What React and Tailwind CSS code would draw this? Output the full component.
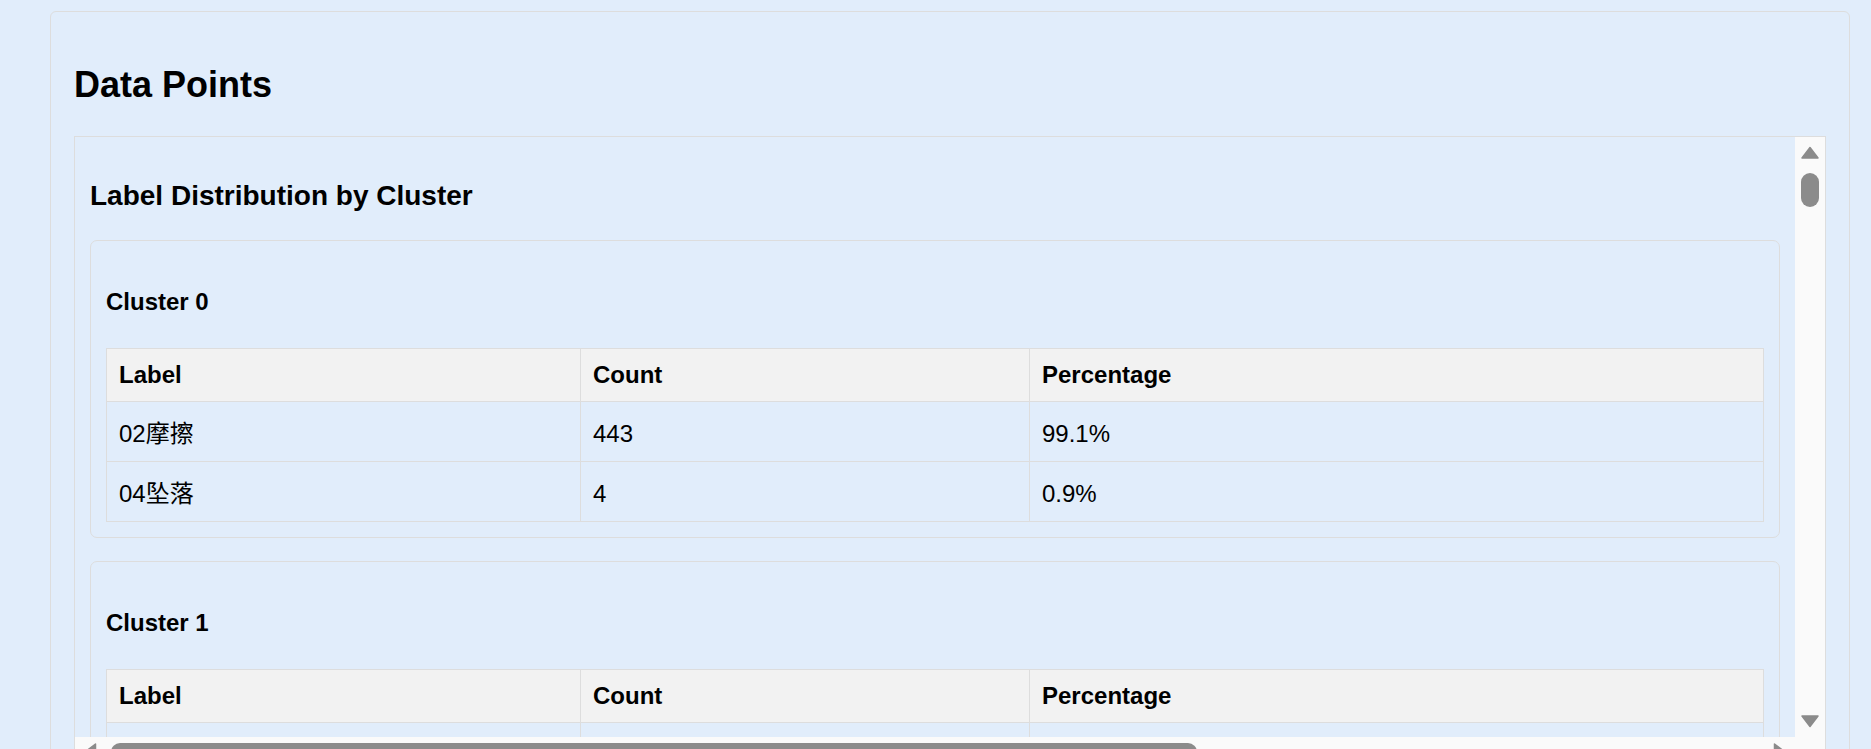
const clusters = [
  {
    id: 0,
    rows: [
      ['02摩擦', 443, '99.1%'],
      ['04坠落', 4, '0.9%'],
    ],
  },
  {
    id: 1,
    rows: [
      ['02摩擦', 318, '97.2%'],
      ['04坠落', 9, '2.8%'],
    ],
  },
];

const cell = 'border border-[#dddddd] p-[12px] text-left align-baseline';

const Arrow = ({ dir }) => {
  const points = {
    up: '9,1.5 17,12 1,12',
    down: '1,1 17,1 9,11.5',
    left: '11.5,1 11.5,17 1,9',
    right: '1.5,1 1.5,17 12,9',
  }[dir];
  const vertical = dir === 'up' || dir === 'down';
  return (
    <svg
      width={vertical ? 18 : 13}
      height={vertical ? 13 : 18}
      viewBox={vertical ? '0 0 18 13' : '0 0 13 18'}
      className="shrink-0"
    >
      <polygon points={points} fill="#8b8b8b" stroke="#8b8b8b" strokeWidth="1.5" strokeLinejoin="round" />
    </svg>
  );
};

const ClusterCard = ({ cluster }) => (
  <div className="mb-[23px] rounded-[7px] border border-[#dddddd] p-[15px]">
    <h4 className="my-[32px] text-[24px] font-bold">Cluster {cluster.id}</h4>
    <table className="w-full table-fixed border-collapse text-[24px]">
      <thead>
        <tr className="bg-[#f2f2f2]">
          <th className={`${cell} w-[474px] font-bold`}>Label</th>
          <th className={`${cell} w-[449px] font-bold`}>Count</th>
          <th className={`${cell} font-bold`}>Percentage</th>
        </tr>
      </thead>
      <tbody>
        {cluster.rows.map(([label, count, pct]) => (
          <tr key={label}>
            <td className={cell}>{label}</td>
            <td className={cell}>{count}</td>
            <td className={cell}>{pct}</td>
          </tr>
        ))}
      </tbody>
    </table>
  </div>
);

export default function App() {
  return (
    <div className="h-screen overflow-hidden bg-[#e1edfb] pl-[50px] pt-[11px] font-['Liberation_Sans','Noto_Sans_CJK_SC',sans-serif] leading-[normal] text-black">
      <div className="w-[1800px] rounded-[6px] border border-[#dddddd] px-[23px] pb-[23px] pt-[22px]">
        <h2 className="my-[30px] text-[36px] font-bold">Data Points</h2>

        <div className="flex flex-col border border-[#dddddd]">
          <div className="flex h-[600px]">
            <div className="flex-1 overflow-hidden p-[15px]">
              <h3 className="my-[28px] text-[28px] font-bold">Label Distribution by Cluster</h3>
              {clusters.map((c) => (
                <ClusterCard key={c.id} cluster={c} />
              ))}
            </div>
            <div className="flex w-[30px] flex-col items-center justify-between bg-[#fafafa] py-[9px]">
              <div className="flex flex-col items-center">
                <Arrow dir="up" />
                <div className="mt-[14px] h-[34px] w-[18px] rounded-full bg-[#8b8b8b]" />
              </div>
              <Arrow dir="down" />
            </div>
          </div>
          <div className="flex h-[30px]">
            <div className="flex flex-1 items-start bg-[#fafafa] px-[9px] pt-[6px]">
              <Arrow dir="left" />
              <div className="ml-[14px] h-[18px] w-[1086px] rounded-full bg-[#8b8b8b]" />
              <div className="flex-1" />
              <Arrow dir="right" />
            </div>
            <div className="w-[30px] bg-[#fafafa]" />
          </div>
        </div>
      </div>
    </div>
  );
}
